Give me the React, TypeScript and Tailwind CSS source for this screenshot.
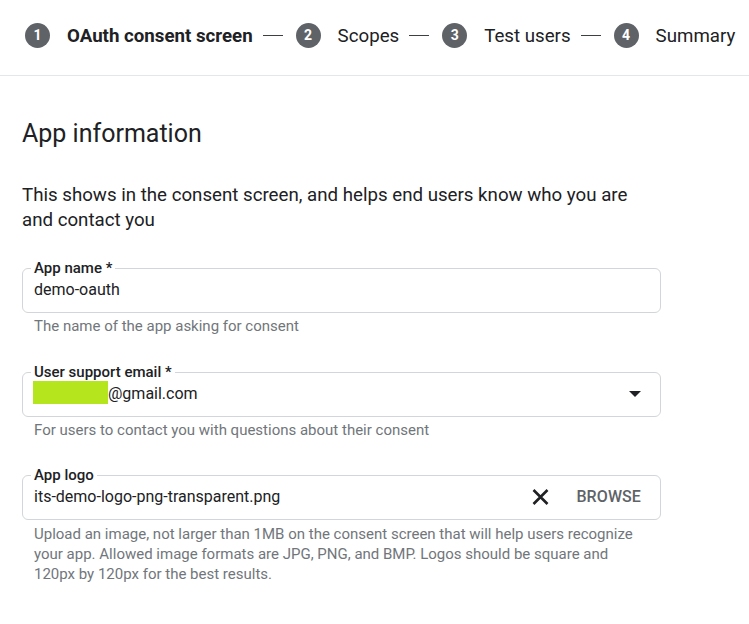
import React from 'react';

const steps = [
  { n: 1, label: 'OAuth consent screen', active: true },
  { n: 2, label: 'Scopes', active: false },
  { n: 3, label: 'Test users', active: false },
  { n: 4, label: 'Summary', active: false },
];

const Stepper: React.FC = () => (
  <div className="h-[76px] border-b border-[#e1e8ea] pb-[4px] pl-[25px] flex items-center whitespace-nowrap">
    {steps.map((s, i) => (
      <div key={s.n} className="flex items-center">
        {i > 0 && <div className="w-[20px] h-px bg-[#3c4043] ml-[10px] mr-[13px]" />}
        <div className="w-[25px] h-[25px] rounded-full bg-[#5f6368] text-white text-[14px] font-bold flex items-center justify-center">
          {s.n}
        </div>
        <span
          className={`ml-[17px] text-[18.7px] leading-[28px] text-[#202124] ${s.active ? 'font-bold' : 'font-normal'}`}
        >
          {s.label}
        </span>
      </div>
    ))}
  </div>
);

interface FieldProps {
  label: string;
  helper: React.ReactNode;
  helperGap: string;
  children: React.ReactNode;
  trailing?: React.ReactNode;
}

const Field: React.FC<FieldProps> = ({ label, helper, helperGap, children, trailing }) => (
  <div>
    <fieldset className="border border-[#d2d5d9] rounded-[6px] p-0 m-0 min-w-0">
      <legend className="ml-[8px] px-[3px] text-[15px] leading-4 font-medium text-[#202124]">{label}</legend>
      <div className="flex items-center pl-[11px] pt-[2px] pb-[10px]">
        <div className="flex-1 flex items-center text-[16px] leading-6 text-[#202124]">{children}</div>
        {trailing}
      </div>
    </fieldset>
    <div className={`${helperGap} pl-[12px] text-[15px] leading-5 text-[#71767b]`}>{helper}</div>
  </div>
);

export default function App() {
  return (
    <div className="w-[749px] h-[624px] bg-white overflow-hidden" style={{ fontFamily: 'Roboto, "Noto Sans", sans-serif' }}>
      <Stepper />
      <div className="pl-[22px] w-[661px]">
        <h1 className="mt-[42px] text-[25px] leading-8 font-normal text-[#202124]">App information</h1>
        <p className="mt-[33px] text-[18.7px] leading-[25px] text-[#202124]">
          This shows in the consent screen, and helps end users know who you are
          <br />
          and contact you
        </p>

        <div className="mt-[27px]">
          <Field label="App name *" helper="The name of the app asking for consent" helperGap="mt-[3px]">
            demo-oauth
          </Field>
        </div>

        <div className="mt-[28px]">
          <Field
            label="User support email *"
            helper="For users to contact you with questions about their consent"
            helperGap="mt-[3px]"
            trailing={
              <svg width="12" height="6" viewBox="0 0 12 6" className="mr-[19px] mt-[-1px]">
                <polygon points="0,0 12,0 6,6" fill="#202124" />
              </svg>
            }
          >
            <span className="inline-block w-[75px] h-[23px] bg-[#b5e61d] -mt-[4px] -ml-px" />
            <span>@gmail.com</span>
          </Field>
        </div>

        <div className="mt-[27px]">
          <Field
            label="App logo"
            helperGap="mt-[4px]"
            helper={
              <>
                Upload an image, not larger than 1MB on the consent screen that will help users recognize
                <br />
                your app. Allowed image formats are JPG, PNG, and BMP. Logos should be square and
                <br />
                120px by 120px for the best results.
              </>
            }
            trailing={
              <div className="flex items-center">
                <svg width="17" height="16" viewBox="0 0 17 16">
                  <path d="M1.5 1 L15.5 15 M15.5 1 L1.5 15" stroke="#202124" strokeWidth="2.6" />
                </svg>
                <span className="ml-[27px] mr-[19px] text-[16px] font-medium tracking-[0.1px] text-[#5f6368]">
                  BROWSE
                </span>
              </div>
            }
          >
            its-demo-logo-png-transparent.png
          </Field>
        </div>
      </div>
    </div>
  );
}
